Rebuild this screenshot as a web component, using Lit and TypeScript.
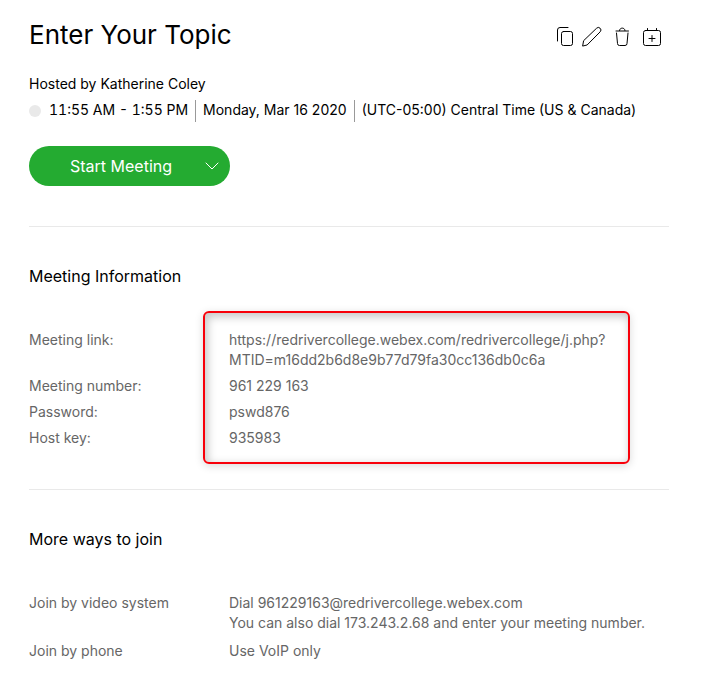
import { LitElement, html, css, svg } from "lit";
import { customElement } from "lit/decorators.js";

const icons = [
  {
    label: "Copy",
    shape: svg`<path d="M1.500 14V3A2.500 2.500 0 0 1 4 .5h8"/><rect x="5.500" y="4.500" width="11" height="14" rx="2"/>`,
  },
  {
    label: "Edit",
    shape: svg`<path d="M-2.300 18.700l.9-5L11.500 1.300a2.500 2.500 0 0 1 3.700 3.500L2.400 17.700z"/>`,
  },
  {
    label: "Delete",
    shape: svg`<path d="M2 4h12.500"/><path d="M5.500 3.500C5.500.2 11 .2 11 3.500M2.500 6l1 10.500a2 2 0 0 0 2 2h5.500a2 2 0 0 0 2-2L14 6"/>`,
  },
  {
    label: "Add to calendar",
    shape: svg`<rect x=".5" y="3.500" width="17" height="15" rx="2"/><path d="M4.500 1.500v2M13.500 1.500v2M9 8.500v6M6 11.500h6"/>`,
  },
];

@customElement("app-root")
export class AppRoot extends LitElement {
  static styles = css`
    :host {
      display: block;
      box-sizing: border-box;
      padding: 19px 37px 27px 29px;
      background: #fff;
      color: #000;
      font: 14px/20px Inter, "Liberation Sans", sans-serif;
    }
    h1, h2, p, dl, dd { margin: 0; }
    h1, h2 { font-weight: 400; }
    h1 { font-size: 26px; line-height: 32px; }
    h2 { font-size: 16px; line-height: 24px; margin-bottom: 42px; }
    header { display: flex; justify-content: space-between; }
    .actions { display: flex; gap: 9px; padding: 8px 6px 0 0; align-items: flex-start; }
    button { border: 0; padding: 0; margin: 0; background: none; color: inherit; font: inherit; cursor: pointer; }
    .icon { display: block; width: 20px; height: 20px; }
    .actions svg { display: block; width: 20px; height: 20px; overflow: visible; }
    svg { fill: none; stroke: currentColor; stroke-linecap: round; stroke-linejoin: round; }
    .host { margin-top: 23px; }
    .when { display: flex; align-items: center; margin-top: 6px; }
    .dot { width: 12px; height: 12px; border-radius: 50%; background: #e9e9e9; margin-right: 8px; }
    .part { padding-bottom: 2px; }
    .time { font-variant-numeric: tabular-nums; }
    .part + .part { border-left: 1px solid #999; margin-left: 7px; padding-left: 7px; }
    .start { display: inline-flex; height: 40px; margin-top: 24px; border-radius: 20px; overflow: hidden; background: #24ab31; color: #fff; vertical-align: top; }
    .main { width: 164px; padding-left: 20px; font-size: 16px; }
    .more { width: 37px; display: flex; align-items: center; justify-content: center; }
    section { border-top: 1px solid #e9e9e9; padding-top: 37px; margin-top: 41px; }
    .first { margin-top: 40px; }
    dl { position: relative; display: grid; grid-template-columns: 200px 1fr; row-gap: 6px; color: #666; }
    .ways { row-gap: 8px; }
    a { color: inherit; text-decoration: none; }
    .callout {
      position: absolute;
      inset: -19px 39px -16px 174px;
      border: 2px solid #f8000a;
      border-radius: 6px;
      box-shadow: 0 2px 8px rgba(0, 0, 0, 0.15), inset 2px 3px 8px 1px rgba(0, 0, 0, 0.22);
      pointer-events: none;
    }
  `;

  render() {
    return html`
      <header>
        <h1>Enter Your Topic</h1>
        <div class="actions">
          ${icons.map(
            (icon) => html`<button class="icon" aria-label=${icon.label}>
              <svg viewBox="0 0 20 20">${icon.shape}</svg>
            </button>`
          )}
        </div>
      </header>
      <p class="host">Hosted by Katherine Coley</p>
      <div class="when">
        <span class="dot"></span>
        <span class="part time">11:55 AM - 1:55 PM</span>
        <span class="part">Monday, Mar 16 2020</span>
        <span class="part">(UTC-05:00) Central Time (US &amp; Canada)</span>
      </div>
      <div class="start">
        <button class="main">Start Meeting</button>
        <button class="more" aria-label="More start options">
          <svg width="14" height="8" viewBox="0 0 14 8"><path d="M1 1l6 6 6-6" /></svg>
        </button>
      </div>
      <section class="first">
        <h2>Meeting Information</h2>
        <dl>
          <dt>Meeting link:</dt>
          <dd><a href="https://redrivercollege.webex.com/redrivercollege/j.php?MTID=m16dd2b6d8e9b77d79fa30cc136db0c6a">https://redrivercollege.webex.com/redrivercollege/j.php?<wbr>MTID=m16dd2b6d8e9b77d79fa30cc136db0c6a</a></dd>
          <dt>Meeting number:</dt>
          <dd>961 229 163</dd>
          <dt>Password:</dt>
          <dd>pswd876</dd>
          <dt>Host key:</dt>
          <dd>935983</dd>
          <div class="callout"></div>
        </dl>
      </section>
      <section>
        <h2>More ways to join</h2>
        <dl class="ways">
          <dt>Join by video system</dt>
          <dd>Dial 961229163@redrivercollege.webex.com<br />You can also dial 173.243.2.68 and enter your meeting number.</dd>
          <dt>Join by phone</dt>
          <dd>Use VoIP only</dd>
        </dl>
      </section>
    `;
  }
}
